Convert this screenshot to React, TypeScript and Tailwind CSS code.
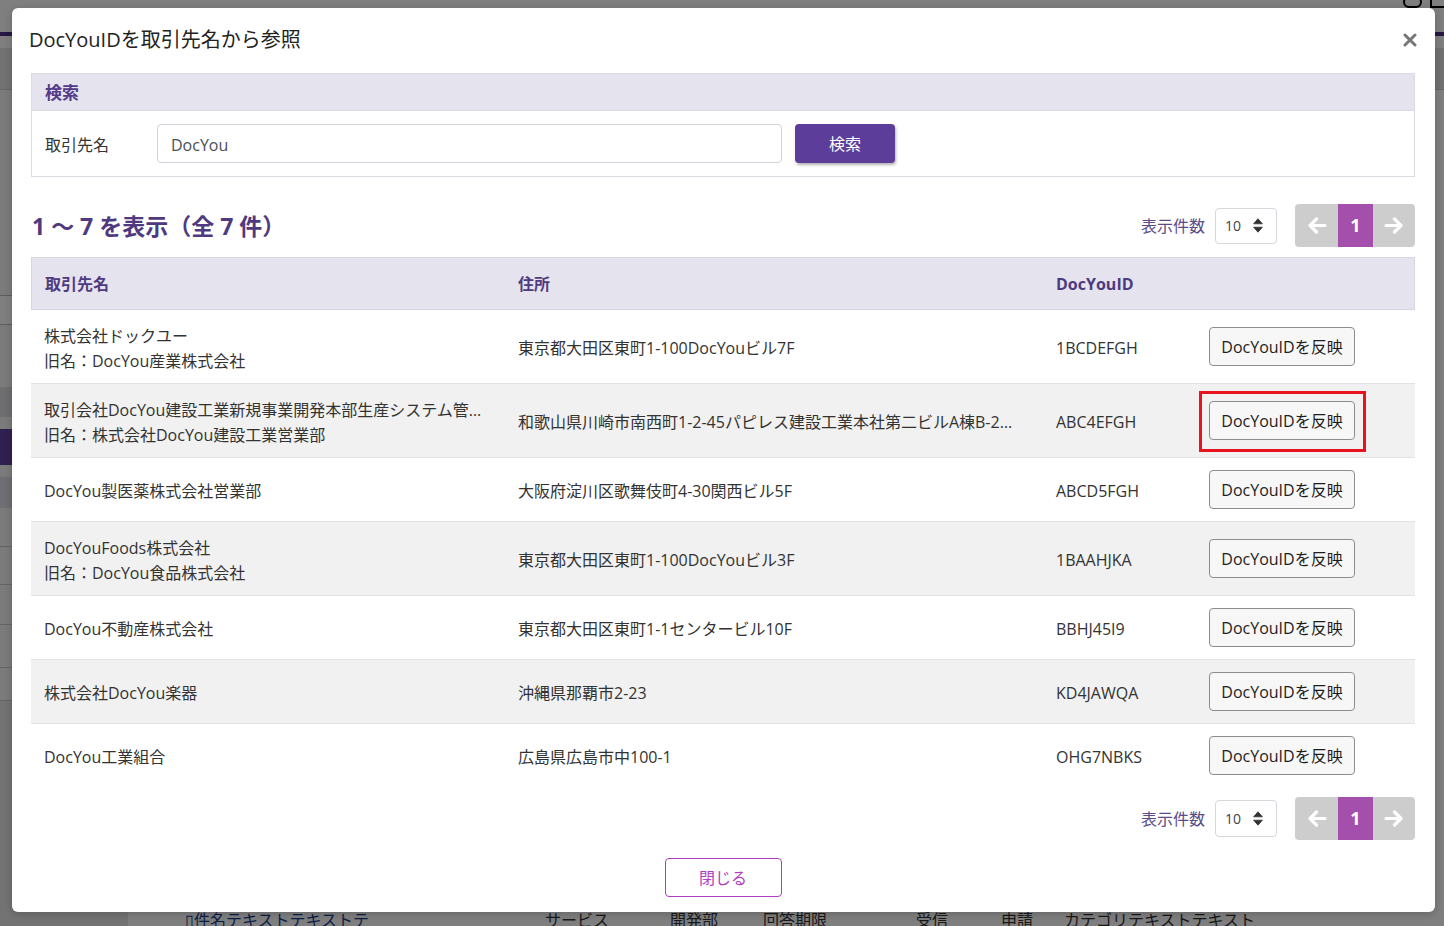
import React from "react";

type Row = { name: string[]; addr: string; id: string; highlight?: boolean };

const rows: Row[] = [
  { name: ["株式会社ドックユー", "旧名：DocYou産業株式会社"], addr: "東京都大田区東町1-100DocYouビル7F", id: "1BCDEFGH" },
  {
    name: ["取引会社DocYou建設工業新規事業開発本部生産システム管理部", "旧名：株式会社DocYou建設工業営業部"],
    addr: "和歌山県川崎市南西町1-2-45パピレス建設工業本社第二ビルA棟B-201",
    id: "ABC4EFGH",
    highlight: true,
  },
  { name: ["DocYou製医薬株式会社営業部"], addr: "大阪府淀川区歌舞伎町4-30関西ビル5F", id: "ABCD5FGH" },
  { name: ["DocYouFoods株式会社", "旧名：DocYou食品株式会社"], addr: "東京都大田区東町1-100DocYouビル3F", id: "1BAAHJKA" },
  { name: ["DocYou不動産株式会社"], addr: "東京都大田区東町1-1センタービル10F", id: "BBHJ45I9" },
  { name: ["株式会社DocYou楽器"], addr: "沖縄県那覇市2-23", id: "KD4JAWQA" },
  { name: ["DocYou工業組合"], addr: "広島県広島市中100-1", id: "OHG7NBKS" },
];

function SortIcon() {
  return (
    <svg width="10" height="15" viewBox="0 0 10 15">
      <path d="M5 0.8 L9.4 5.8 H0.6 Z" fill="#333" strokeLinejoin="round" stroke="#333" strokeWidth="0.8" />
      <path d="M5 14.2 L9.4 9.2 H0.6 Z" fill="#333" strokeLinejoin="round" stroke="#333" strokeWidth="0.8" />
    </svg>
  );
}

function Arrow({ dir }: { dir: "left" | "right" }) {
  return (
    <svg width="20" height="17" viewBox="0 0 20 17" style={{ transform: dir === "right" ? "scaleX(-1)" : undefined }}>
      <path d="M18 8.5 H3 M9.5 2 L3 8.5 L9.5 15" fill="none" stroke="#fff" strokeWidth="3.2" strokeLinecap="round" strokeLinejoin="round" />
    </svg>
  );
}

function Pager() {
  return (
    <div className="flex h-[43px] w-[120px] overflow-hidden rounded-[4px] bg-[#cdcdcd]">
      <div className="flex w-[43px] items-center justify-center">
        <Arrow dir="left" />
      </div>
      <div className="flex w-[35px] items-center justify-center bg-[#a44fab] text-[18px] font-bold text-white">1</div>
      <div className="flex w-[42px] items-center justify-center">
        <Arrow dir="right" />
      </div>
    </div>
  );
}

function PageControls({ selectH }: { selectH: string }) {
  return (
    <div className="flex items-center">
      <span className="mr-[10px] text-[16px] text-[#5b4b88]">表示件数</span>
      <div className={`flex ${selectH} w-[62px] items-center justify-between rounded-[4px] border border-[#d6d6dd] bg-white pl-[9px] pr-[13px] text-[14px] text-[#444]`}>
        <span>10</span>
        <SortIcon />
      </div>
      <div className="ml-[18px]">
        <Pager />
      </div>
    </div>
  );
}

function CloseIcon() {
  return (
    <svg width="14" height="14" viewBox="0 0 14 14">
      <path d="M2 2 L12 12 M12 2 L2 12" stroke="#777" strokeWidth="3" strokeLinecap="round" />
    </svg>
  );
}

function BackgroundPage() {
  return (
    <div className="flex h-full w-full flex-col">
      <div className="flex h-[32px] items-start justify-end gap-[8px]">
        <div className="-mt-[4px] h-[12px] w-[19px] rounded-[7px] border-2 border-black" />
        <div className="-mr-[4px] -mt-[4px] h-[12px] w-[18px] border-2 border-black" />
      </div>
      <div className="h-[4px] bg-[#4d2e88]" />
      <div className="h-[12px]" />
      <div className="h-[42px] border-b border-[#cfcfcf] bg-[#e4e4e4]" />
      <div className="flex flex-1">
        <div className="flex w-[128px] flex-col bg-[#f6f6f6]">
          <div className="h-[205px]" />
          <div className="h-[30px] border-y border-[#bdbdbd] bg-white" />
          <div className="h-[62px]" />
          <div className="h-[30px] bg-[#dcdce0]" />
          <div className="h-[12px]" />
          <div className="h-[36px] bg-[#5e40a0]" />
          <div className="h-[12px]" />
          <div className="h-[31px] bg-[#dcdce6]" />
          <div className="h-[39px] border-b border-[#c8c8c8]" />
          <div className="h-[38px] border-b border-[#c8c8c8]" />
          <div className="h-[40px] border-b border-[#c8c8c8]" />
          <div className="h-[43px] border-b border-[#c8c8c8]" />
          <div className="h-[33px] border-b border-[#c8c8c8]" />
          <div className="flex-1 bg-[#e6e6e6]" />
        </div>
        <div className="flex flex-1 flex-col">
          <div className="flex-1" />
          <div className="flex h-[16px] items-start whitespace-nowrap text-[16px] leading-[20px] text-[#333]">
            <span className="ml-[57px] w-[360px] text-[#1a3f8f] underline">▯件名テキストテキストテ</span>
            <span className="w-[125px]">サービス</span>
            <span className="w-[93px]">開発部</span>
            <span className="w-[153px]">回答期限</span>
            <span className="w-[85px]">受信</span>
            <span className="w-[63px]">申請</span>
            <span>カテゴリテキストテキスト</span>
          </div>
        </div>
      </div>
    </div>
  );
}

export default function App() {
  return (
    <div className="relative h-[926px] w-[1444px] overflow-hidden bg-white font-['Open_Sans','Noto_Sans_CJK_JP',sans-serif]">
      <BackgroundPage />
      <div className="absolute inset-0 bg-black/50">
        <div className="ml-[12px] mt-[8px] flex h-[904px] w-[1423px] flex-col rounded-[6px] bg-white shadow-[0_2px_8px_rgba(0,0,0,0.2)]">
          <div className="flex items-center justify-between pl-[17px] pr-[18px] pt-[17px]">
            <h2 className="text-[20px] leading-[30px] text-[#222]">DocYouIDを取引先名から参照</h2>
            <CloseIcon />
          </div>

          <div className="flex flex-col pl-[19px] pr-[20px] pt-[18px]">
            {/* search panel */}
            <div className="border border-[#dcdbe4]">
              <div className="flex h-[37px] items-center border-b border-[#dcdbe4] bg-[#e4e3ee] px-[13px] pt-[2px] text-[17px] font-bold text-[#533b88]">
                検索
              </div>
              <div className="flex h-[65px] items-center px-[13px]">
                <span className="w-[112px] pt-[2px] text-[16px] text-[#333]">取引先名</span>
                <div className="flex h-[39px] w-[625px] items-center rounded-[4px] border border-[#ced4da] px-[13px] pt-[2px] text-[16px] text-[#495057]">
                  DocYou
                </div>
                <button className="ml-[13px] h-[39px] w-[100px] rounded-[4px] bg-[#5c3d99] pt-[1px] text-[16px] text-white shadow-[1px_2px_3px_rgba(0,0,0,0.3)]">
                  検索
                </button>
              </div>
            </div>

            {/* heading + pager */}
            <div className="mt-[27px] flex h-[43px] items-center justify-between">
              <div className="pl-[1px] pt-[2px] text-[23px] font-bold text-[#4f3a80]">1 ～ 7 を表示（全 7 件）</div>
              <PageControls selectH="h-[36px]" />
            </div>

            {/* table */}
            <div className="mt-[10px]">
              <div className="grid h-[53px] grid-cols-[473px_538px_153px_1fr] items-center border border-[#d6d5e0] bg-[#e4e3ee] text-[16px] font-bold text-[#4f3a80]">
                <div className="px-[13px]">取引先名</div>
                <div className="px-[13px]">住所</div>
                <div className="px-[13px]">DocYouID</div>
                <div />
              </div>
              {rows.map((r, i) => (
                <div
                  key={i}
                  className={`grid grid-cols-[474px_538px_153px_1fr] items-center py-[12px] text-[16px] leading-[24.5px] text-[#333] ${
                    i % 2 === 1 ? "bg-[#f1f1f1]" : "bg-white"
                  } ${i < rows.length - 1 ? "border-b border-[#e2e2e2]" : ""}`}
                >
                  <div className="min-w-0 translate-y-[2px] px-[13px]">
                    {r.name.map((n, j) => (
                      <div key={j} className="truncate">
                        {n}
                      </div>
                    ))}
                  </div>
                  <div className="min-w-0 translate-y-[2px] truncate pl-[13px] pr-[26px]">{r.addr}</div>
                  <div className="translate-y-[2px] px-[13px]">{r.id}</div>
                  <div className="px-[13px]">
                    <div className="relative w-[146px]">
                      <button className="h-[39px] w-[146px] rounded-[4px] border border-[#8d8d8d] bg-[#f7f7f7] pt-[1px] text-[16px] text-[#1e1e1e]">
                        DocYouIDを反映
                      </button>
                      {r.highlight && (
                        <span className="pointer-events-none absolute -bottom-[12px] -left-[10px] -right-[11px] -top-[10px] border-[3px] border-[#e8131e]" />
                      )}
                    </div>
                  </div>
                </div>
              ))}
            </div>

            <div className="mt-[10px] flex justify-end">
              <PageControls selectH="h-[37px]" />
            </div>

            <div className="mt-[18px] flex justify-center">
              <button className="h-[39px] w-[117px] rounded-[4px] border border-[#b23dc0] bg-white pt-[1px] text-[16px] text-[#b23dc0]">
                閉じる
              </button>
            </div>
          </div>
        </div>
      </div>
    </div>
  );
}
